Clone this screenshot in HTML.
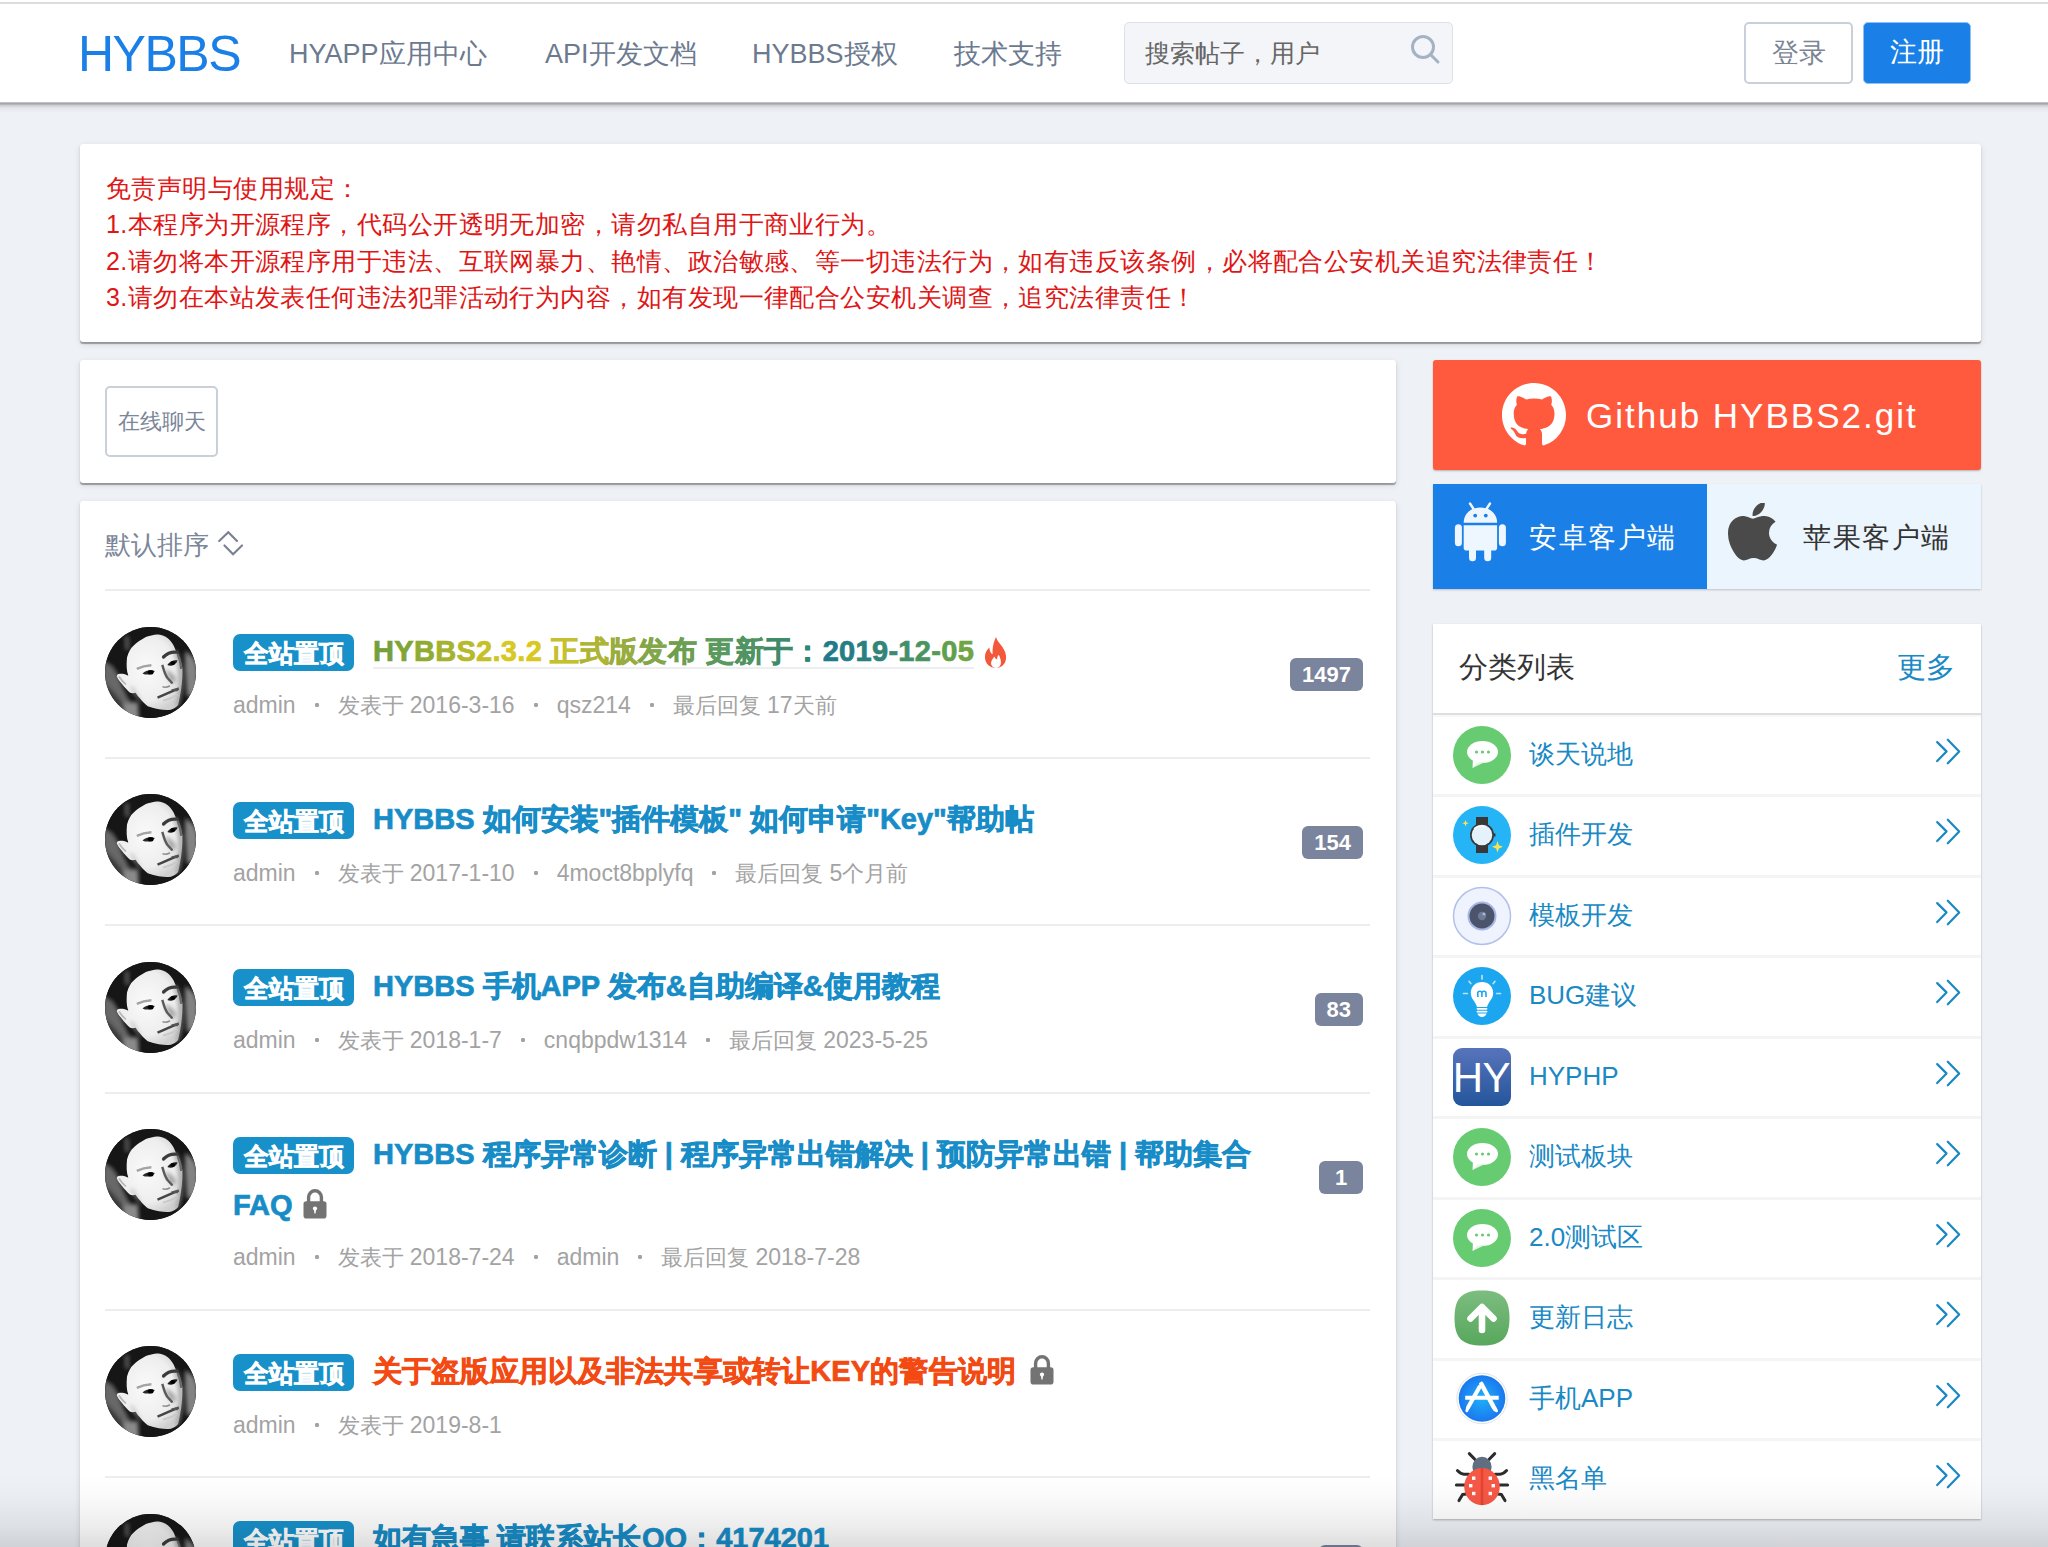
<!DOCTYPE html>
<html><head><meta charset="utf-8">
<style>
*{box-sizing:border-box;margin:0;padding:0}
html,body{width:2048px;height:1547px;overflow:hidden}
body{background:#eef1f6;font-family:"Liberation Sans",sans-serif;position:relative;color:#333}
.abs{position:absolute}
#topwhite{left:0;top:0;width:2048px;height:4px;background:#fff}
#topline{left:0;top:2px;width:2048px;height:2px;background:#dcdcdc}
#header{left:0;top:4px;width:2048px;height:98px;background:#fff;}
#hshadow{left:0;top:102px;width:2048px;height:11px;background:linear-gradient(#c0c1c4 0.5px,#a6a7aa 1.5px,#b5b6ba 2.5px,#ccced2 3.5px,#d7d9de 4.5px,#dfe1e6 5.5px,#e6e8ed 6.5px,#eaecf1 8px,#eceef3 9.5px,#eef1f6 11px)}
#logo{left:78px;top:24px;font-size:50px;line-height:60px;color:#1a7fe6;letter-spacing:-1.5px}
.nav{top:34px;font-size:27px;line-height:40px;color:#6c7a8f;white-space:nowrap}
#search{left:1124px;top:22px;width:329px;height:62px;background:#f4f5f8;border:1px solid #dde1e8;border-radius:5px}
#search span{position:absolute;left:20px;top:11px;font-size:25px;line-height:38px;color:#666}
#search svg{position:absolute;left:285px;top:11px}
.btn{top:22px;height:62px;border-radius:5px;font-size:27px;line-height:58px;text-align:center}
#login{left:1744px;width:109px;border:2px solid #c9d0da;color:#7b8494;background:#fff}
#reg{left:1863px;width:108px;border:1px solid #8fc1f3;background:#1a7fe6;color:#fff}
.card{background:#fff;border-radius:3px;box-shadow:0 1.5px 1px rgba(0,0,0,.32),0 2px 6px rgba(0,0,0,.12)}
#disc{left:80px;top:144px;width:1901px;height:198px}
#disc div{position:absolute;left:26px;font-size:25px;letter-spacing:0.45px;line-height:36px;color:#e01616;white-space:nowrap}
#chat{left:80px;top:360px;width:1316px;height:123px}
#chatbtn{left:25px;top:26px;width:113px;height:71px;border:2px solid #c9d0da;border-radius:5px;font-size:22px;line-height:67px;text-align:center;color:#7b8699}
#list{left:80px;top:501px;width:1316px;height:1100px}
#sort{left:105px;top:526px;font-size:26px;line-height:38px;color:#7b8699}
#sort svg{position:absolute;left:113px;top:4.5px}
.divider{left:105px;width:1265px;height:2px;background:#ededed}
.avatar{left:105px}
.badge{left:233px;width:121px;height:37px;background:#1891ca;border-radius:7px;color:#fff;font-weight:bold;-webkit-text-stroke:.6px #fff;font-size:25px;line-height:38px;text-align:center}
.ptitle{left:373px;font-size:29px;line-height:51px;font-weight:bold;color:#178cc6;white-space:nowrap;-webkit-text-stroke:.7px currentColor}
.ptitle br+*{}
.grad{letter-spacing:.3px;border-bottom:2px solid #eceef1}
.fire{vertical-align:-7px;margin-left:9px}
.lock{vertical-align:-4px;margin-left:2px}
.meta{left:233px;font-size:22px;line-height:32px;color:#a3a3a3;white-space:nowrap}
.meta i{display:inline-block;width:42px;height:6px;vertical-align:5px;background:radial-gradient(circle at 21px 3px,#a3a3a3 1.9px,rgba(163,163,163,0) 2.5px)}
.meta .l{font-size:23px}
.count{right:685px;height:33px;padding:0 12px;min-width:44px;text-align:center;background:#7a849c;border-radius:6px;color:#fff;font-weight:bold;font-size:22px;line-height:33px}
#gh{left:1433px;top:360px;width:548px;height:110px;background:#ff5a3e;border-radius:3px;box-shadow:0 1px 2px rgba(0,0,0,.25)}
#gh svg{position:absolute;left:69px;top:23px}
#gh span{position:absolute;left:153px;top:34px;font-size:35px;line-height:44px;color:#fff;letter-spacing:2px;white-space:nowrap}
#apps{left:1433px;top:484px;width:548px;height:105px;box-shadow:0 1px 2px rgba(0,0,0,.2)}
#android{left:0;top:0;width:274px;height:105px;background:#1a7fe6}
#ios{left:274px;top:0;width:274px;height:105px;background:#ebf5fd}
#apps span{position:absolute;top:34px;font-size:28px;line-height:40px;letter-spacing:1.5px;white-space:nowrap}
#cat{left:1433px;top:624px;width:548px;height:895px;background:#fff;box-shadow:0 1px 2px rgba(0,0,0,.28)}
#cathead{left:1459px;top:647px;font-size:29px;line-height:40px;color:#333}
#catmore{left:1897px;top:647px;font-size:29px;line-height:40px;color:#1a89c4}
.crow{left:1433px;width:548px;height:80.5px;border-top:3px solid #f4f4f4}
#cathr{left:1433px;top:713px;width:548px;height:2px;background:#dedede}
#cathr2{left:1433px;top:715px;width:548px;height:2px;background:#f8f8f8}
.cicon{position:absolute;left:19px;top:8px}
.cname{position:absolute;left:96px;top:17px;font-size:26px;line-height:40px;color:#1a89c4;white-space:nowrap}
.chev{position:absolute;left:501px;top:21px}
#fade{left:0;top:1476px;width:2048px;height:71px;background:linear-gradient(rgba(0,0,0,0),rgba(0,0,0,.02) 30%,rgba(0,0,0,.07) 70%,rgba(0,0,0,.13))}
</style></head>
<body>
<svg width="0" height="0" style="position:absolute">
<defs>
<clipPath id="avclip"><circle cx="45.5" cy="45.5" r="45.5"/></clipPath>
<linearGradient id="avbg" x1="0" y1="0" x2="1" y2="0"><stop offset="0" stop-color="#555"/><stop offset=".35" stop-color="#151515"/><stop offset=".8" stop-color="#1a1a1a"/><stop offset="1" stop-color="#6a6a6a"/></linearGradient>
<filter id="avblur" x="-10%" y="-10%" width="120%" height="120%"><feGaussianBlur stdDeviation="0.75"/></filter>
<filter id="avblur2" x="-50%" y="-50%" width="200%" height="200%"><feGaussianBlur stdDeviation="2.2"/></filter>
<radialGradient id="facegr" cx="0.45" cy="0.45" r="0.6"><stop offset="0" stop-color="#fafafa"/><stop offset=".7" stop-color="#eeeeee"/><stop offset="1" stop-color="#cfcfcf"/></radialGradient>
<g id="av" clip-path="url(#avclip)"><rect width="91" height="91" fill="#131313"/><g filter="url(#avblur)">
<rect x="-5" y="-5" width="101" height="101" fill="#131313"/>
<path d="M-2 34C6 36 11 42 14 50L19 63L25 75L29 91H-2Z" fill="#676767" filter="url(#avblur2)"/>
<path d="M-2 55C4 60 9 66 14 72L21 82L25 91H-2Z" fill="#383838" filter="url(#avblur2)"/>
<path d="M18.4 76L33 75L34 92H20Z" fill="#8a8a8a" filter="url(#avblur2)"/>
<path d="M80 24C87 28 93 34 93 44V66L82 70L80 42Z" fill="#838383" filter="url(#avblur2)"/>
<path d="M19 10L24 8L25 22L20 24Z" fill="#505050" filter="url(#avblur2)"/>
<path d="M23.3 48.8C21.5 44 21.3 38 22 30.6C23.5 25 25.5 21.5 28.2 19C31 16 33.8 14 36.7 12.4C39.5 10.5 42.3 9.3 45.2 8.7C48 8 51 7.5 53.7 7.5C57 8 60 9.2 62.8 11.2C65.5 13.5 67.5 16.5 68.9 19L71.9 26.3C74.5 31 76.4 36 77.4 41.5C77.6 47 77.3 52 76.8 56.7C76.3 61 75.8 65 75 68.9C74.4 72 73.9 75 73.1 78C71 80.5 68.5 82 65.8 82.8C62 83.3 58 83 53.7 82.2C50 81.5 46.5 80.5 42.7 79.2C40 77 37.5 74.5 35.5 71.9C33.5 70 32 68 30.6 65.8C29 66.2 27 66.3 25.1 65.8C22 63 19.5 60.3 17.2 57.3C15 54.5 13 52 11.8 49.4C11.8 48 12.6 47.2 13.6 47C15.5 46.7 17.3 46.7 19 47C20.5 47.5 22 48 23.3 48.8Z" fill="url(#facegr)"/>
<path d="M71 23C74.5 30 77 40 77.5 50C78 60 77 70 73.5 79L70.5 80.5C74 71 75.2 61 74.8 51C74.3 41 72.5 32 69 24Z" fill="#8e8e8e" filter="url(#avblur2)"/>
<path d="M25 60C29 66 33 72 38 77L34.5 71C32 67 30 63.5 28 60Z" fill="#b8b8b8" filter="url(#avblur2)"/>
<path d="M14 49.5C16 52.5 18.5 55.5 21 57.5" stroke="#b5b5b5" stroke-width="1.6" fill="none"/>
<path d="M31.8 41.8C36 39.8 41 38.5 46.4 38.2" stroke="#a4a4a4" stroke-width="2.4" fill="none"/>
<path d="M37.5 46.4C41 43.2 45.5 42.6 50 44C46.5 48 41.5 48.5 37.5 46.4Z" fill="#2a2a2a"/>
<ellipse cx="45.6" cy="45.3" rx="3" ry="2.3" fill="#050505"/>
<path d="M58.5 30C62 26.5 67 24.6 71.9 25.2" stroke="#3a3a3a" stroke-width="3.2" fill="none" stroke-linecap="round"/>
<path d="M72.5 27C74.5 31 75.8 36 76.2 42" stroke="#6a6a6a" stroke-width="2.2" fill="none"/>
<path d="M62.3 38C64.8 34 68.8 32.6 72.6 33.4C71 37.8 66.5 39.8 62.3 38Z" fill="#1e1e1e"/>
<ellipse cx="67.8" cy="36" rx="2.4" ry="2" fill="#050505"/>
<path d="M59.5 43C62 48.5 64.5 52.5 67 56.5L71.5 53C69.5 48 65 43.5 59.5 43Z" fill="#a0a0a0" filter="url(#avblur2)"/>
<path d="M57.3 37.9C58.5 42 59.8 47.6 62.5 51C64.5 53.5 66.5 54.5 67.2 56.7" stroke="#5a5a5a" stroke-width="2.4" fill="none"/>
<path d="M57.5 59.8C60 60.6 62.5 60.3 65 58.8" stroke="#909090" stroke-width="1.6" fill="none"/>
<path d="M52.5 70.7C59 68 66 64.6 73.7 61.6" stroke="#454545" stroke-width="2.4" fill="none"/>
<path d="M66 62.5C69 62 71.5 61 73.7 60.5L73 64C70 64.5 68 64.2 66 62.5Z" fill="#555"/>
<path d="M58 73.6C63 72.6 68 70.6 73 67.6" stroke="#c8c8c8" stroke-width="1.8" fill="none"/>
</g></g>
<g id="i-chat">
<circle cx="30" cy="30" r="29" fill="#67cb72"/>
<ellipse cx="30.5" cy="27" rx="15.5" ry="11" fill="#fff"/>
<path d="M21 34L20.5 43L31 36Z" fill="#fff"/>
<path d="M20.5 43L33 37L35 36L25 38Z" fill="#e3f4e4"/>
<circle cx="24.5" cy="27" r="1.6" fill="#67cb72"/><circle cx="30.5" cy="27" r="1.6" fill="#67cb72"/><circle cx="36.5" cy="27" r="1.6" fill="#67cb72"/>
</g>
<g id="i-watch">
<circle cx="30" cy="30" r="29" fill="#25b4f6"/>
<rect x="24" y="12" width="12" height="36" fill="#383838"/>
<circle cx="30" cy="30" r="12" fill="#383838"/>
<circle cx="30" cy="30" r="10.3" fill="#e4f2fb"/>
<path d="M22 24C25 21 29 20.5 33 21.5" stroke="#f6fbff" stroke-width="1.5" fill="none"/>
<rect x="41.5" y="28.5" width="2" height="3" fill="#383838"/>
<path d="M13.5 15L14.4 17.3L16.7 18.2L14.4 19.1L13.5 21.4L12.6 19.1L10.3 18.2L12.6 17.3Z" fill="#fce34a"/>
<path d="M45.5 36L46.9 40.2L51 41.8L46.9 43.4L45.5 47.6L44.1 43.4L40 41.8L44.1 40.2Z" fill="#fce34a"/>
</g>
<g id="i-lens">
<circle cx="30" cy="30" r="28.5" fill="#eef3fd" stroke="#b3c0ea" stroke-width="1.5"/>
<circle cx="30" cy="30" r="14.5" fill="#a9b6e3"/>
<circle cx="30" cy="30" r="12.5" fill="#4b546a"/>
<circle cx="30" cy="30" r="4.2" fill="#6d7a98"/>
<circle cx="32" cy="28" r="1.6" fill="#aab4cf"/>
</g>
<g id="i-bulb">
<circle cx="30" cy="30" r="29" fill="#1da6f0"/>
<path d="M30 16C23.5 16 18.8 20.8 18.8 27C18.8 31.5 21.5 34 23.5 37.5C24.3 39 24.8 40 25 41H35C35.2 40 35.7 39 36.5 37.5C38.5 34 41.2 31.5 41.2 27C41.2 20.8 36.5 16 30 16Z" fill="#fff"/>
<rect x="24.6" y="42" width="10.8" height="1.7" rx=".8" fill="#fff"/><rect x="24.6" y="44.8" width="10.8" height="1.7" rx=".8" fill="#fff"/>
<path d="M25.5 47.6H34.5C34 50 32.2 51 30 51C27.8 51 26 50 25.5 47.6Z" fill="#fff"/>
<path d="M25.8 31V26.3M25.8 27C25.8 24.6 29.9 24.6 29.9 27V31M29.9 27C29.9 24.6 34 24.6 34 27V31" stroke="#1da6f0" stroke-width="1.6" fill="none"/>
<path d="M30 9.5V13M17 15.3L18.8 17.5M43 15.3L41.2 17.5M11.5 27.5H15.3M44.7 27.5H48.5" stroke="#b9e3fb" stroke-width="1.7" stroke-linecap="round"/>
</g>
<linearGradient id="hyg" x1="0" y1="0" x2="0" y2="1"><stop offset="0" stop-color="#5774bb"/><stop offset="1" stop-color="#24559b"/></linearGradient>
<g id="i-hy">
<rect x="1" y="1" width="58" height="58" rx="9" fill="url(#hyg)"/>
<text x="0.8" y="45.3" font-family="Liberation Sans" font-size="42" fill="#fff" letter-spacing="-0.6">HY</text>
</g>
<linearGradient id="upg" x1="0" y1="0" x2="0" y2="1"><stop offset="0" stop-color="#7cbd80"/><stop offset="1" stop-color="#58a75c"/></linearGradient>
<g id="i-up">
<path d="M30 2.5C49 2.5 57.5 9 57.5 30C57.5 51 49 57.5 30 57.5C11 57.5 2.5 51 2.5 30C2.5 9 11 2.5 30 2.5Z" fill="url(#upg)"/>
<path d="M18.5 30.5L30 19L41.5 30.5M30 20V42" stroke="#fff" stroke-width="6.6" stroke-linecap="round" stroke-linejoin="round" fill="none"/>
</g>
<radialGradient id="asg" cx=".5" cy=".5" r=".5"><stop offset="0" stop-color="#1fb0fa"/><stop offset="1" stop-color="#1a78ee"/></radialGradient>
<g id="i-appstore">
<circle cx="30" cy="29.5" r="25.2" fill="#fff" stroke="#e2e2e2" stroke-width="1"/>
<circle cx="30" cy="29.5" r="23.3" fill="url(#asg)"/>
<path d="M13.2 28.8H46.7" stroke="#fff" stroke-width="4"/>
<path d="M28.4 18.2L16.8 38.6L14.7 42L15.5 38L27 17.4Z" fill="#fff" stroke="#fff" stroke-width="2.6" stroke-linejoin="round"/>
<path d="M29.8 13.8L42.5 37.5C43.5 39.5 44.5 41 44.7 42C43 41.5 41.5 40 40.8 38.5L28.3 14.8Z" fill="#fff" stroke="#fff" stroke-width="2.6" stroke-linejoin="round"/>
</g>
<g id="i-bug">
<path d="M17.3 4.6L23.5 11M42.7 4.6L36.5 11M5.4 21.6C7.5 24 9 25.2 12 25.2H17M54.6 21.6C52.5 24 51 25.2 48 25.2H43M4.4 36H13M55.6 36H47M7 51.6L10.6 45.4L14.5 44.9M53 51.6L49.4 45.4L45.5 44.9" stroke="#2c2c2c" stroke-width="3" fill="none" stroke-linecap="round" stroke-linejoin="round"/>
<ellipse cx="30" cy="18" rx="9.6" ry="10.3" fill="#5f6e80"/>
<ellipse cx="30" cy="37.6" rx="17.8" ry="18.6" fill="#f65846"/>
<rect x="28.7" y="19" width="2.6" height="37" fill="#e2452f"/>
<rect x="20" y="27.5" width="3.4" height="3.4" fill="#fff"/><rect x="36.6" y="27.5" width="3.4" height="3.4" fill="#fff"/>
<rect x="17" y="35" width="3.4" height="3.4" fill="#fff"/><rect x="39.6" y="35" width="3.4" height="3.4" fill="#fff"/>
<rect x="20" y="42.8" width="3.4" height="3.4" fill="#fff"/><rect x="36.6" y="42.8" width="3.4" height="3.4" fill="#fff"/>
</g>
</defs></svg>

<div id="topwhite" class="abs"></div><div id="topline" class="abs"></div>
<div id="header" class="abs"></div><div id="hshadow" class="abs"></div>
<div id="logo" class="abs">HYBBS</div>
<div class="nav abs" style="left:289px">HYAPP应用中心</div>
<div class="nav abs" style="left:545px">API开发文档</div>
<div class="nav abs" style="left:752px">HYBBS授权</div>
<div class="nav abs" style="left:954px">技术支持</div>
<div id="search" class="abs"><span>搜索帖子，用户</span><svg width="32" height="32" viewBox="0 0 32 32"><circle cx="13" cy="13" r="10.5" fill="none" stroke="#a5b2c6" stroke-width="3"/><path d="M20.5 20.5L28 28" stroke="#a5b2c6" stroke-width="3" stroke-linecap="round"/></svg></div>
<div id="login" class="btn abs">登录</div>
<div id="reg" class="btn abs">注册</div>

<div id="disc" class="card abs">
<div style="top:26px">免责声明与使用规定：</div>
<div style="top:62px">1.本程序为开源程序，代码公开透明无加密，请勿私自用于商业行为。</div>
<div style="top:99px">2.请勿将本开源程序用于违法、互联网暴力、艳情、政治敏感、等一切违法行为，如有违反该条例，必将配合公安机关追究法律责任！</div>
<div style="top:135px">3.请勿在本站发表任何违法犯罪活动行为内容，如有发现一律配合公安机关调查，追究法律责任！</div>
</div>

<div id="chat" class="card abs"><div id="chatbtn" class="abs">在线聊天</div></div>
<div id="list" class="card abs"></div>
<div id="sort" class="abs">默认排序<svg width="27" height="27" viewBox="0 0 27 27"><path d="M1.2 10L10.3 1.2L19 10M6.5 14.4L15.1 23.2L24 14.4" fill="none" stroke="#7a8093" stroke-width="2.1" stroke-linecap="round"/></svg></div>
<div class="divider abs" style="top:589px"></div>
<svg class="avatar abs" style="top:626.5px" width="91" height="91"><use href="#av"/></svg>
<div class="badge abs" style="top:634px">全站置顶</div>
<div class="ptitle abs" style="top:626px"><span class="grad"><span style="color:#73a03a">H</span><span style="color:#80a535">Y</span><span style="color:#8fab32">B</span><span style="color:#a4b230">B</span><span style="color:#b6b92c">S</span><span style="color:#c7bf28">2</span><span style="color:#d0c424">.</span><span style="color:#d8c822">3</span><span style="color:#d8c822">.</span><span style="color:#d8c820">2</span> <span style="color:#c5c030">正</span><span style="color:#aeb535">式</span><span style="color:#98ad3e">版</span><span style="color:#82a748">发</span><span style="color:#6c9f4f">布</span> <span style="color:#5a9a5e">更</span><span style="color:#4f9462">新</span><span style="color:#3e8a6a">于</span><span style="color:#2f8576">：</span><span style="color:#1f7a8a">2</span><span style="color:#257d86">0</span><span style="color:#2a8080">1</span><span style="color:#338579">9</span><span style="color:#3b8a72">-</span><span style="color:#43906a">1</span><span style="color:#4b9462">2</span><span style="color:#569a58">-</span><span style="color:#60a04d">0</span><span style="color:#6fa545">5</span></span><svg class="fire" width="26" height="32" viewBox="1 0 22 29"><path d="M12 1C13 6 20 10 21 17.5C22 24.5 17.5 29 12 29C6.5 29 2 25 2 19C2 15 4 12.5 6 10.5C6 14 7.5 16 9 16.5C8.5 11 10 5 12 1Z" fill="#f4583a"/><path d="M12 29C9 29 7.5 26.5 7.5 24.5C7.5 22 9.5 20.5 10.5 18.5C11 20.5 12.5 21 13 21C13 19.5 13.5 18 14.5 17C15.5 19 16.5 21.5 16.5 24C16.5 26.8 14.5 29 12 29Z" fill="#fff"/></svg></div>
<div class="meta abs" style="top:689px"><span class="l">admin</span><i></i>发表于 <span class="l">2016-3-16</span><i></i><span class="l">qsz214</span><i></i>最后回复 <span class="l">17</span>天前</div>
<div class="count abs" style="top:658px">1497</div>
<div class="divider abs" style="top:756.5px"></div>
<svg class="avatar abs" style="top:794.0px" width="91" height="91"><use href="#av"/></svg>
<div class="badge abs" style="top:801.5px">全站置顶</div>
<div class="ptitle abs" style="top:793.5px">HYBBS 如何安装"插件模板" 如何申请"Key"帮助帖</div>
<div class="meta abs" style="top:856.5px"><span class="l">admin</span><i></i>发表于 <span class="l">2017-1-10</span><i></i><span class="l">4moct8bplyfq</span><i></i>最后回复 <span class="l">5</span>个月前</div>
<div class="count abs" style="top:825.5px">154</div>
<div class="divider abs" style="top:924px"></div>
<svg class="avatar abs" style="top:961.5px" width="91" height="91"><use href="#av"/></svg>
<div class="badge abs" style="top:969px">全站置顶</div>
<div class="ptitle abs" style="top:961px">HYBBS 手机APP 发布&amp;自助编译&amp;使用教程</div>
<div class="meta abs" style="top:1024px"><span class="l">admin</span><i></i>发表于 <span class="l">2018-1-7</span><i></i><span class="l">cnqbpdw1314</span><i></i>最后回复 <span class="l">2023-5-25</span></div>
<div class="count abs" style="top:993px">83</div>
<div class="divider abs" style="top:1091.5px"></div>
<svg class="avatar abs" style="top:1129.0px" width="91" height="91"><use href="#av"/></svg>
<div class="badge abs" style="top:1136.5px">全站置顶</div>
<div class="ptitle abs" style="top:1128.5px">HYBBS 程序异常诊断 | 程序异常出错解决 | 预防异常出错 | 帮助集合</div>
<div class="ptitle abs" style="left:233px;top:1179.5px">FAQ <svg class="lock" width="24" height="30" viewBox="0 0 24 30"><path d="M5.6 13V8.2A6.4 6.4 0 0 1 18.4 8.2V13" fill="none" stroke="#737373" stroke-width="3.4"/><rect x="0.5" y="12.2" width="23" height="17.3" rx="2.8" fill="#737373"/><circle cx="12" cy="19.6" r="2.1" fill="#fff"/><path d="M11 20.5H13L12.6 24.5H11.4Z" fill="#fff"/></svg></div>
<div class="meta abs" style="top:1240.5px"><span class="l">admin</span><i></i>发表于 <span class="l">2018-7-24</span><i></i><span class="l">admin</span><i></i>最后回复 <span class="l">2018-7-28</span></div>
<div class="count abs" style="top:1160.5px">1</div>
<div class="divider abs" style="top:1308.5px"></div>
<svg class="avatar abs" style="top:1346.0px" width="91" height="91"><use href="#av"/></svg>
<div class="badge abs" style="top:1353.5px">全站置顶</div>
<div class="ptitle abs" style="top:1345.5px"><span style="color:#f24a12;letter-spacing:.15px">关于盗版应用以及非法共享或转让KEY的警告说明</span> <span style="margin-left:4px"></span><svg class="lock" width="24" height="30" viewBox="0 0 24 30"><path d="M5.6 13V8.2A6.4 6.4 0 0 1 18.4 8.2V13" fill="none" stroke="#737373" stroke-width="3.4"/><rect x="0.5" y="12.2" width="23" height="17.3" rx="2.8" fill="#737373"/><circle cx="12" cy="19.6" r="2.1" fill="#fff"/><path d="M11 20.5H13L12.6 24.5H11.4Z" fill="#fff"/></svg></div>
<div class="meta abs" style="top:1408.5px"><span class="l">admin</span><i></i>发表于 <span class="l">2019-8-1</span></div>
<div class="divider abs" style="top:1476px"></div>
<svg class="avatar abs" style="top:1513.5px" width="91" height="91"><use href="#av"/></svg>
<div class="badge abs" style="top:1521px">全站置顶</div>
<div class="ptitle abs" style="top:1513px">如有急事 请联系站长QQ：4174201</div>
<div class="count abs" style="top:1545px">?</div>

<div id="gh" class="abs"><svg width="64" height="64" viewBox="0 0 16 16"><path fill="#fff" d="M8 0C3.58 0 0 3.58 0 8c0 3.54 2.29 6.53 5.47 7.59.4.07.55-.17.55-.38 0-.19-.01-.82-.01-1.49-2.01.37-2.53-.49-2.69-.94-.09-.23-.48-.94-.82-1.13-.28-.15-.68-.52-.01-.53.63-.01 1.08.58 1.23.82.72 1.21 1.87.87 2.330.66.07-.52.28-.87.51-1.07-1.78-.2-3.64-.89-3.64-3.95 0-.87.31-1.59.82-2.15-.08-.2-.36-1.02.08-2.12 0 0 .67-.21 2.2.82.64-.18 1.32-.27 2-.27.68 0 1.36.09 2 .27 1.530-1.04 2.2-.82 2.2-.82.44 1.1.16 1.92.08 2.12.51.56.82 1.27.82 2.15 0 3.07-1.87 3.75-3.65 3.95.29.25.54.73.54 1.48 0 1.07-.01 1.93-.01 2.2 0 .21.15.46.55.38A8.013 8.013 0 0016 8c0-4.42-3.58-8-8-8z"/></svg><span>Github HYBBS2.git</span></div>
<div id="apps" class="abs">
<div id="android" class="abs"><svg style="position:absolute;left:21px;top:18px" width="54" height="62" viewBox="0 0 54 62"><path d="M16 1.5L19.6 7M36 1.5L32.4 7" stroke="#eef7ff" stroke-width="2.4" stroke-linecap="round"/><path d="M9.7 20.8C9.7 11.5 17 5.4 26.4 5.4C35.8 5.4 43.1 11.5 43.1 20.8Z" fill="#eef7ff"/><circle cx="21.2" cy="13.6" r="1.9" fill="#1a7fe6"/><circle cx="31.8" cy="13.6" r="1.9" fill="#1a7fe6"/><path d="M9.7 23.2H43.1V46C43.1 47.5 42 48.6 40.5 48.6H12.3C10.8 48.6 9.7 47.5 9.7 46Z" fill="#eef7ff"/><rect x="0.9" y="22.3" width="7" height="22" rx="3.5" fill="#eef7ff"/><rect x="44.9" y="22.3" width="7" height="22" rx="3.5" fill="#eef7ff"/><rect x="15" y="42" width="7" height="17.2" rx="3.5" fill="#eef7ff"/><rect x="30.2" y="42" width="7" height="17.2" rx="3.5" fill="#eef7ff"/></svg><span style="left:96px;color:#fff">安卓客户端</span></div>
<div id="ios" class="abs"><svg style="position:absolute;left:19px;top:19px" width="53" height="60" viewBox="0 0 384 460"><path fill="#4a4a4a" d="M318.7 228.7c-.2-36.700 16.4-64.4 50-84.8-18.8-26.900-47.2-41.700-84.700-44.600-35.500-2.800-74.300 20.700-88.500 20.700-15 0-49.400-19.700-76.400-19.700C63.300 101.200 4 144.800 4 233.500q0 39.300 14.400 81.200c12.800 36.700 59 126.700 107.200 125.200 25.200-.6 43-17.900 75.800-17.900 31.800 0 48.300 17.900 76.400 17.900 48.600-.7 90.400-82.500 102.600-119.300-65.200-30.700-61.700-90-61.700-91.900zm-56.600-164.200c27.300-32.400 24.800-61.900 24-72.500-24.100 1.400-52 16.400-67.900 34.900-17.500 19.800-27.800 44.300-25.600 71.900 26.100 2 49.900-11.400 69.500-34.300z"/></svg><span style="left:96px;color:#333">苹果客户端</span></div>
</div>
<div id="cat" class="abs"></div>
<div id="cathead" class="abs">分类列表</div>
<div id="catmore" class="abs">更多</div>
<div class="crow abs" style="top:713.50px"><svg class="cicon" width="60" height="60"><use href="#i-chat"/></svg><span class="cname">谈天说地</span><svg class="chev" width="28" height="28" viewBox="0 0 28 28"><path d="M3.2 4.1L12.5 13.4L3.2 23.1M13.8 1.7L25.2 13.4L13.8 25.3" fill="none" stroke="#1a88c2" stroke-width="2.2" stroke-linecap="round" stroke-linejoin="round"/></svg></div>
<div class="crow abs" style="top:794.05px"><svg class="cicon" width="60" height="60"><use href="#i-watch"/></svg><span class="cname">插件开发</span><svg class="chev" width="28" height="28" viewBox="0 0 28 28"><path d="M3.2 4.1L12.5 13.4L3.2 23.1M13.8 1.7L25.2 13.4L13.8 25.3" fill="none" stroke="#1a88c2" stroke-width="2.2" stroke-linecap="round" stroke-linejoin="round"/></svg></div>
<div class="crow abs" style="top:874.60px"><svg class="cicon" width="60" height="60"><use href="#i-lens"/></svg><span class="cname">模板开发</span><svg class="chev" width="28" height="28" viewBox="0 0 28 28"><path d="M3.2 4.1L12.5 13.4L3.2 23.1M13.8 1.7L25.2 13.4L13.8 25.3" fill="none" stroke="#1a88c2" stroke-width="2.2" stroke-linecap="round" stroke-linejoin="round"/></svg></div>
<div class="crow abs" style="top:955.15px"><svg class="cicon" width="60" height="60"><use href="#i-bulb"/></svg><span class="cname">BUG建议</span><svg class="chev" width="28" height="28" viewBox="0 0 28 28"><path d="M3.2 4.1L12.5 13.4L3.2 23.1M13.8 1.7L25.2 13.4L13.8 25.3" fill="none" stroke="#1a88c2" stroke-width="2.2" stroke-linecap="round" stroke-linejoin="round"/></svg></div>
<div class="crow abs" style="top:1035.70px"><svg class="cicon" width="60" height="60"><use href="#i-hy"/></svg><span class="cname">HYPHP</span><svg class="chev" width="28" height="28" viewBox="0 0 28 28"><path d="M3.2 4.1L12.5 13.4L3.2 23.1M13.8 1.7L25.2 13.4L13.8 25.3" fill="none" stroke="#1a88c2" stroke-width="2.2" stroke-linecap="round" stroke-linejoin="round"/></svg></div>
<div class="crow abs" style="top:1116.25px"><svg class="cicon" width="60" height="60"><use href="#i-chat"/></svg><span class="cname">测试板块</span><svg class="chev" width="28" height="28" viewBox="0 0 28 28"><path d="M3.2 4.1L12.5 13.4L3.2 23.1M13.8 1.7L25.2 13.4L13.8 25.3" fill="none" stroke="#1a88c2" stroke-width="2.2" stroke-linecap="round" stroke-linejoin="round"/></svg></div>
<div class="crow abs" style="top:1196.80px"><svg class="cicon" width="60" height="60"><use href="#i-chat"/></svg><span class="cname">2.0测试区</span><svg class="chev" width="28" height="28" viewBox="0 0 28 28"><path d="M3.2 4.1L12.5 13.4L3.2 23.1M13.8 1.7L25.2 13.4L13.8 25.3" fill="none" stroke="#1a88c2" stroke-width="2.2" stroke-linecap="round" stroke-linejoin="round"/></svg></div>
<div class="crow abs" style="top:1277.35px"><svg class="cicon" width="60" height="60"><use href="#i-up"/></svg><span class="cname">更新日志</span><svg class="chev" width="28" height="28" viewBox="0 0 28 28"><path d="M3.2 4.1L12.5 13.4L3.2 23.1M13.8 1.7L25.2 13.4L13.8 25.3" fill="none" stroke="#1a88c2" stroke-width="2.2" stroke-linecap="round" stroke-linejoin="round"/></svg></div>
<div class="crow abs" style="top:1357.90px"><svg class="cicon" width="60" height="60"><use href="#i-appstore"/></svg><span class="cname">手机APP</span><svg class="chev" width="28" height="28" viewBox="0 0 28 28"><path d="M3.2 4.1L12.5 13.4L3.2 23.1M13.8 1.7L25.2 13.4L13.8 25.3" fill="none" stroke="#1a88c2" stroke-width="2.2" stroke-linecap="round" stroke-linejoin="round"/></svg></div>
<div class="crow abs" style="top:1438.45px"><svg class="cicon" width="60" height="60"><use href="#i-bug"/></svg><span class="cname">黑名单</span><svg class="chev" width="28" height="28" viewBox="0 0 28 28"><path d="M3.2 4.1L12.5 13.4L3.2 23.1M13.8 1.7L25.2 13.4L13.8 25.3" fill="none" stroke="#1a88c2" stroke-width="2.2" stroke-linecap="round" stroke-linejoin="round"/></svg></div><div id="cathr" class="abs"></div><div id="cathr2" class="abs"></div>
<div id="fade" class="abs"></div>
</body></html>
